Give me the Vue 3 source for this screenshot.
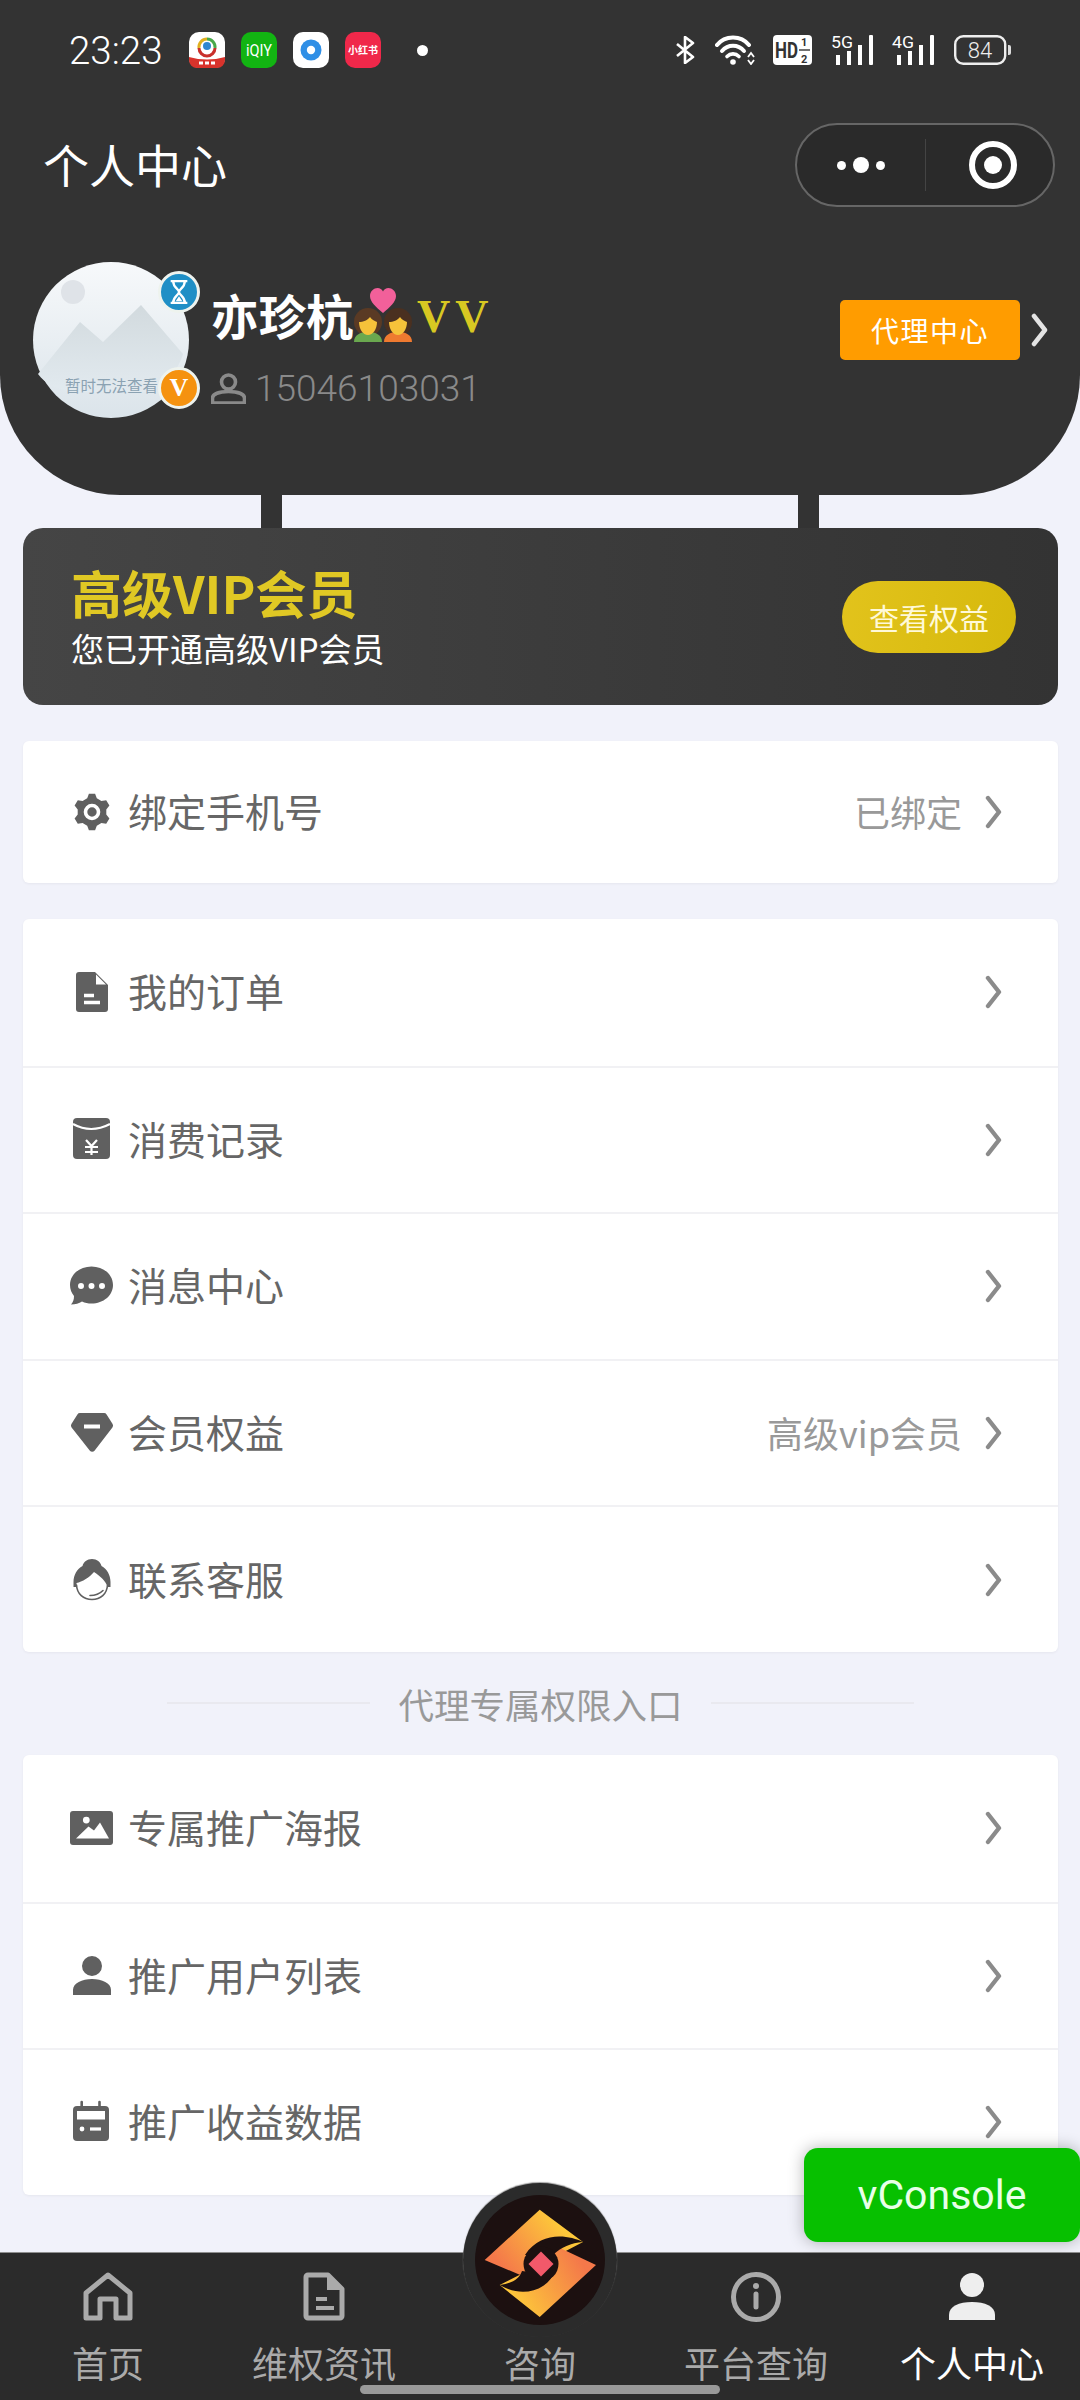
<script setup>
// six-tooth gear outline for the phone row
const gear = () => {
  const pts = [];
  for (let i = 0; i < 6; i++) {
    const a = (Math.PI / 3) * i - Math.PI / 2;
    [[-0.34, 14.5], [-0.17, 18.5], [0.17, 18.5], [0.34, 14.5]].forEach(([d, r]) => {
      pts.push(`${(19 + r * Math.cos(a + d)).toFixed(1)} ${(19 + r * Math.sin(a + d)).toFixed(1)}`);
    });
  }
  return 'M' + pts.join('L') + 'Z';
};

const icons = {
  gear: { d: gear(), w: 'M19 12.5a6.5 6.5 0 1 0 0 13a6.5 6.5 0 1 0 0-13Z', sw: 3.6 },
  doc: {
    d: 'M6 -1H22L35 12V36a3 3 0 0 1-3 3H6a3 3 0 0 1-3-3V2a3 3 0 0 1 3-3Z',
    w: 'M11 22.5H21M11 29.5H27',
    sw: 3.4,
    wf: 'M23 1.5L33 11.5H23Z'
  },
  packet: {
    d: 'M4 -3H33a4 4 0 0 1 4 4V34a4 4 0 0 1-4 4H4a4 4 0 0 1-4-4V1a4 4 0 0 1 4-4Z',
    w: 'M0 3Q18 13 37 3M13 19L18.5 25L24 19M18.5 25V34M12 26H25M12 31H25',
    sw: 2.2
  },
  chat: {
    d: 'M18.5 -0.5C30.5 -0.5 40 7.5 40 18C40 28.5 30.5 36.5 18.5 36.5C15 36.5 12 36 9 34.5C6 36.5 2.5 37.5 -2 37.5C0 35 1 33 1 29C-1.5 26 -3 22 -3 18C-3 7.5 6.5 -0.5 18.5 -0.5Z',
    wf: 'M8 16a3 3 0 1 0 0 6a3 3 0 1 0 0-6ZM18.5 16a3 3 0 1 0 0 6a3 3 0 1 0 0-6ZM29 16a3 3 0 1 0 0 6a3 3 0 1 0 0-6Z'
  },
  gem: {
    d: 'M7 -1H31a3 3 0 0 1 2.6 1.4L39.6 10a3 3 0 0 1-.2 3.4L21.5 36.8a3 3 0 0 1-4.6 0L-1.4 13.4a3 3 0 0 1-.2-3.4L4.4 .4A3 3 0 0 1 7 -1Z',
    w: 'M11 12.5H27',
    sw: 4
  },
  agent: {
    d: 'M19 -2C24 -2 27.5 1 28.5 5C34 8 37.5 14 37.5 21V26H34.5C33 20 27 15 21 11C17 16 9 21 3.5 22V26H.5V21C.5 14 4 8 9.5 5C10.5 1 14 -2 19 -2Z',
    s: 'M3.500 24C4 33 10.500 38.500 19 38.500C27.500 38.500 34 33 34.500 24M17 34.500C21.500 34.500 26.500 33 30 29.500',
    sw: 1.6
  },
  picture: {
    d: 'M0 2H37a3 3 0 0 1 3 3V33a3 3 0 0 1-3 3H0a3 3 0 0 1-3-3V5a3 3 0 0 1 3-3Z',
    wf: 'M13.3 7.7a3.4 3.4 0 1 0 0 6.8a3.4 3.4 0 1 0 0-6.8ZM3 29.5L15.5 17.5L21 21.5L27 13.5L36 29.5Z'
  },
  user: {
    d: 'M19 -1a10 10 0 1 0 0 20a10 10 0 1 0 0-20ZM0 38V33C0 26 9 22 19 22C29 22 38 26 38 33V38Z'
  },
  calendar: {
    d: 'M4 3H32a4 4 0 0 1 4 4V34a4 4 0 0 1-4 4H4a4 4 0 0 1-4-4V7a4 4 0 0 1 4-4Z',
    w: 'M17 26H28',
    sw: 3.2,
    wf: 'M4 8H32V16.5H4ZM9 23.6a2.4 2.4 0 1 0 0 4.8a2.4 2.4 0 1 0 0-4.8Z',
    s: 'M8.7 -1V7M26.5 -1V7',
    ssw: 2.6
  }
};

const mainRows = [
  { icon: 'doc', label: '我的订单' },
  { icon: 'packet', label: '消费记录' },
  { icon: 'chat', label: '消息中心' },
  { icon: 'gem', label: '会员权益', value: '高级vip会员' },
  { icon: 'agent', label: '联系客服' }
];

const agentRows = [
  { icon: 'picture', label: '专属推广海报' },
  { icon: 'user', label: '推广用户列表' },
  { icon: 'calendar', label: '推广收益数据' }
];

const groups = [
  { cls: 'short', rows: [{ icon: 'gear', label: '绑定手机号', value: '已绑定' }] },
  { rows: mainRows },
  { title: '代理专属权限入口', rows: agentRows }
];
</script>

<template>
  <div class="page">
    <header class="hero">
      <div class="status">
        <div class="status-left">
          <span class="clock">23:23</span>
          <svg class="app" viewBox="0 0 36 36">
            <rect width="36" height="36" rx="10" fill="#fff" />
            <path d="M10 16a8 8 0 0 1 8-9" fill="none" stroke="#e0b020" stroke-width="3" />
            <path d="M18 7a8 8 0 0 1 8 9" fill="none" stroke="#4aa84a" stroke-width="3" />
            <path d="M26 16a8 8 0 0 1-16 0" fill="none" stroke="#c9302c" stroke-width="3" />
            <circle cx="18" cy="14" r="4" fill="#2f86d0" />
            <path d="M0 25Q18 30 36 25V28a8 8 0 0 1-8 8H8a8 8 0 0 1-8-8Z" fill="#d8332c" />
            <path d="M10 31H26" stroke="#fff" stroke-width="3" stroke-dasharray="4 2" />
          </svg>
          <svg class="app" viewBox="0 0 36 36">
            <rect width="36" height="36" rx="10" fill="#12b412" />
            <text class="app-text iq" x="18" y="24" text-anchor="middle" textLength="26" lengthAdjust="spacingAndGlyphs">iQIY</text>
          </svg>
          <svg class="app" viewBox="0 0 36 36">
            <rect width="36" height="36" rx="10" fill="#fff" />
            <circle cx="18" cy="18" r="10.5" fill="#2f8fe6" />
            <circle cx="18" cy="18" r="4.2" fill="#fff" />
          </svg>
          <svg class="app" viewBox="0 0 36 36">
            <rect width="36" height="36" rx="10" fill="#f0284a" />
            <text class="app-text" x="18" y="22" text-anchor="middle" textLength="30" lengthAdjust="spacingAndGlyphs">小红书</text>
          </svg>
          <i class="status-dot"></i>
        </div>
        <div class="status-right">
          <svg class="s-bt" viewBox="0 0 21 28">
            <path d="M2 8L18 21L10 27V1L18 7L2 20" fill="none" stroke="#fff" stroke-width="2.6" stroke-linejoin="round" />
          </svg>
          <svg class="s-wifi" viewBox="0 0 40 30">
            <g fill="none" stroke="#fff" stroke-linecap="round">
              <path d="M2 10C10 0 26 0 34 10" stroke-width="4" />
              <path d="M7 16C13 9 23 9 29 16" stroke-width="4" />
              <path d="M12 21.500C15.500 18 20.500 18 24 21.500" stroke-width="3.6" />
            </g>
            <circle cx="18" cy="27" r="2.8" fill="#fff" />
            <path d="M33 22L36 18L39 22M33 25L36 29L39 25" fill="none" stroke="#fff" stroke-width="1.8" />
          </svg>
          <svg class="s-hd" viewBox="0 0 39 30">
            <rect width="39" height="30" rx="4" fill="#fff" />
            <text class="hd" x="2" y="23" textLength="23" lengthAdjust="spacingAndGlyphs">HD</text>
            <text class="hd-small" x="28" y="11">1</text>
            <text class="hd-small" x="28" y="28">2</text>
            <path d="M26 15H37" stroke="#333" stroke-width="1.4" />
          </svg>
          <svg v-for="net in ['5G', '4G']" :key="net" class="s-net" viewBox="0 0 43 30">
            <text class="net" x="0" y="13" textLength="22" lengthAdjust="spacingAndGlyphs">{{ net }}</text>
            <rect x="5" y="20" width="4" height="10" fill="#fff" />
            <rect x="16" y="16" width="4" height="14" fill="#fff" />
            <rect x="27" y="10" width="4" height="20" fill="#fff" />
            <rect x="38" y="0" width="4" height="30" rx="1" fill="#fff" />
          </svg>
          <svg class="s-batt" viewBox="0 0 57 30">
            <rect x="1.2" y="1.2" width="50" height="27.6" rx="8" fill="none" stroke="#eee" stroke-width="2.4" />
            <path d="M54 10h1a2 2 0 0 1 2 2v6a2 2 0 0 1-2 2h-1Z" fill="#ddd" />
            <text class="batt" x="26" y="23" text-anchor="middle">84</text>
          </svg>
        </div>
      </div>

      <div class="nav">
        <h1 class="nav-title">个人中心</h1>
        <div class="capsule">
          <div class="capsule-dots"><i class="d-s"></i><i class="d-l"></i><i class="d-s"></i></div>
          <div class="capsule-target"><i></i></div>
        </div>
      </div>

      <div class="profile">
        <div class="avatar">
          <svg class="avatar-img" viewBox="0 0 156 156">
            <defs>
              <linearGradient id="av" x1="0" y1="0" x2="0" y2="1">
                <stop offset="0" stop-color="#f7f9fb" />
                <stop offset="1" stop-color="#dbe4ea" />
              </linearGradient>
              <linearGradient id="mt" x1="0" y1="0" x2="0" y2="1">
                <stop offset="0" stop-color="#d2dade" />
                <stop offset="1" stop-color="#e2eaef" />
              </linearGradient>
            </defs>
            <circle cx="78" cy="78" r="78" fill="url(#av)" />
            <circle cx="40" cy="30" r="12" fill="#dfe3e8" />
            <path d="M5 112L47 60L70 80L108 43L150 92C148 100 138 120 120 130H40C25 128 12 122 5 112Z" fill="url(#mt)" />
            <text class="avatar-text" x="32" y="130">暂时无法查看</text>
          </svg>
          <span class="badge badge-blue">
            <svg viewBox="0 0 24 30" width="20" height="26">
              <path d="M2 2H22M2 28H22M5 2C5 10 12 11 12 15C12 19 5 20 5 28M19 2C19 10 12 11 12 15C12 19 19 20 19 28" fill="none" stroke="#fff" stroke-width="2.8" />
              <path d="M8 26L12 20L16 26Z" fill="#fff" />
            </svg>
          </span>
          <span class="badge badge-orange">V</span>
        </div>

        <div class="info">
          <div class="name-row">
            <span class="name">亦珍杭</span>
            <svg class="couple" viewBox="0 0 58 56">
              <circle cx="14" cy="36" r="14" fill="#5a3a24" />
              <circle cx="44" cy="36" r="14" fill="#4a3020" />
              <path d="M0 56C0 49 6 46 14 46C22 46 28 49 28 56Z" fill="#6aa84f" />
              <path d="M30 56C30 49 36 46 44 46C52 46 58 49 58 56Z" fill="#ef7a30" />
              <path d="M5 36C9 36 14 34 16 31C18 34 21 35 23 36C23 43 19 49 14 49C9 49 5 43 5 36Z" fill="#f6c23a" />
              <path d="M35 36C39 36 44 34 46 31C48 34 51 35 53 36C53 43 49 49 44 49C39 49 35 43 35 36Z" fill="#f6c23a" />
              <path d="M29 27C22 21 16 16 16 10C16 5 20 2 23.500 2C26 2 28 3.500 29 5.500C30 3.500 32 2 34.500 2C38 2 42 5 42 10C42 16 36 21 29 27Z" fill="#f2609a" />
            </svg>
            <span class="vv">VV</span>
          </div>
          <div class="phone">
            <svg class="phone-icon" viewBox="0 0 35 31">
              <circle cx="17.5" cy="9" r="7" fill="none" stroke="#8a8a8a" stroke-width="3.6" />
              <path d="M1.5 30V25C1.5 21 8 18.500 17.500 18.500C27 18.500 33.500 21 33.500 25V30Z" fill="none" stroke="#8a8a8a" stroke-width="3.6" />
            </svg>
            <span>15046103031</span>
          </div>
        </div>

        <button type="button" class="agent-btn">代理中心</button>
        <svg class="agent-arrow" viewBox="0 0 17 34">
          <path d="M3 3L14 17L3 31" fill="none" stroke="#e4e4e4" stroke-width="4.5" stroke-linecap="round" stroke-linejoin="round" />
        </svg>
      </div>
    </header>

    <div class="joints"><i></i><i></i></div>

    <section class="vip">
      <div>
        <div class="vip-title">高级VIP会员</div>
        <div class="vip-sub">您已开通高级VIP会员</div>
      </div>
      <button type="button" class="vip-btn">查看权益</button>
    </section>

    <main class="menus">
      <template v-for="(group, g) in groups" :key="g">
        <div v-if="group.title" class="divider-title">
          <i></i><span>{{ group.title }}</span><i></i>
        </div>
        <ul class="card" :class="[group.cls, { spaced: !group.title }]">
          <li v-for="row in group.rows" :key="row.label" class="row">
            <svg class="row-icon" viewBox="0 0 38 38">
              <path :d="icons[row.icon].d" fill="#606060" />
              <path v-if="icons[row.icon].s" :d="icons[row.icon].s" fill="none" stroke="#606060" :stroke-width="icons[row.icon].ssw || icons[row.icon].sw" stroke-linecap="round" />
              <path v-if="icons[row.icon].wf" :d="icons[row.icon].wf" fill="#fff" />
              <path v-if="icons[row.icon].w" :d="icons[row.icon].w" fill="none" stroke="#fff" :stroke-width="icons[row.icon].sw" />
            </svg>
            <span class="row-label">{{ row.label }}</span>
            <span v-if="row.value" class="row-value">{{ row.value }}</span>
            <svg class="row-arrow" viewBox="0 0 17 34">
              <path d="M3 3L14 17L3 31" fill="none" stroke="#8b8b8b" stroke-width="4.4" stroke-linecap="round" stroke-linejoin="round" />
            </svg>
          </li>
        </ul>
      </template>
    </main>

    <nav class="tabs">
      <div class="tab">
        <svg class="tab-icon" viewBox="0 0 50 50">
          <path d="M3 46V21L25 3L47 21V46H33V27H17V46Z" fill="none" stroke="#aaa" stroke-width="5" stroke-linejoin="round" />
        </svg>
        <span>首页</span>
      </div>
      <div class="tab">
        <svg class="tab-icon" viewBox="0 0 50 50">
          <path d="M9 3H29L43 17V44a2 2 0 0 1-2 2H9a2 2 0 0 1-2-2V5a2 2 0 0 1 2-2Z" fill="none" stroke="#aaa" stroke-width="5" stroke-linejoin="round" />
          <path d="M28 3V18H43Z" fill="#aaa" />
          <path d="M17 27H28M17 36H35" stroke="#aaa" stroke-width="4" />
        </svg>
        <span>维权资讯</span>
      </div>
      <div class="tab">
        <div class="tab-icon"></div>
        <span>咨询</span>
        <div class="logo">
          <svg viewBox="0 0 154 154" width="154" height="154">
            <defs>
              <linearGradient id="lgA" gradientUnits="userSpaceOnUse" x1="95" y1="40" x2="40" y2="85">
                <stop offset="0" stop-color="#fdc83a" />
                <stop offset="1" stop-color="#f4784a" />
              </linearGradient>
              <linearGradient id="lgB" gradientUnits="userSpaceOnUse" x1="55" y1="125" x2="122" y2="85">
                <stop offset="0" stop-color="#fdc83a" />
                <stop offset="1" stop-color="#f4784a" />
              </linearGradient>
            </defs>
            <circle cx="77" cy="77" r="65" fill="#1c1010" />
            <path d="M21.7 77L76.7 26.7L120 59L78 81L62 94Z" fill="url(#lgA)" />
            <path d="M133 82L76.7 134L36.7 102L78 81L97 65Z" fill="url(#lgB)" />
            <path d="M120 59C105 52 78 48 62 72L90 72C98 64 108 60 120 59Z" fill="#1c1010" />
            <path d="M36.7 102C50 100 56 96 59 88L90 92C82 108 58 115 36.7 102Z" fill="#1c1010" />
            <circle cx="78" cy="81" r="17.500" fill="#1c1010" />
            <path d="M78 68.500L90.500 81L78 93.500L65.500 81Z" fill="#f2596a" />
          </svg>
        </div>
      </div>
      <div class="tab">
        <svg class="tab-icon" viewBox="0 0 50 50">
          <circle cx="25" cy="25" r="22.500" fill="none" stroke="#aaa" stroke-width="5" />
          <circle cx="25" cy="14" r="3" fill="#aaa" />
          <path d="M25 22V35" stroke="#aaa" stroke-width="5" stroke-linecap="round" />
        </svg>
        <span>平台查询</span>
      </div>
      <div class="tab active">
        <svg class="tab-icon" viewBox="0 0 50 50">
          <circle cx="25" cy="13" r="12" fill="#eee" />
          <path d="M2 48V43C2 34 12 30 25 30C38 30 48 34 48 43V48Z" fill="#eee" />
        </svg>
        <span>个人中心</span>
      </div>
      <i class="home-bar"></i>
    </nav>

    <div class="vconsole">vConsole</div>
  </div>
</template>

<style scoped>
.page {
  position: relative;
  width: 1080px;
  height: 2400px;
  overflow: hidden;
  display: flex;
  flex-direction: column;
  background: #f1f2fa;
  font-family: "Noto Sans CJK SC", "Noto Sans", sans-serif;
}

.hero {
  height: 495px;
  flex: none;
  background: #333;
  border-radius: 0 0 120px 120px;
  color: #fff;
}

.status {
  height: 100px;
  display: flex;
  align-items: center;
  justify-content: space-between;
  padding: 0 69px 0 69px;
}

.status-left,
.status-right {
  display: flex;
  align-items: center;
}

.status-left {
  gap: 16px;
}

.status-right {
  gap: 18.6px;
}

.clock {
  width: 104px;
  font-family: Roboto, sans-serif;
  font-weight: 300;
  font-size: 38.5px;
}

.app {
  width: 36px;
  height: 36px;
}

.app-text {
  font-family: "Noto Sans CJK SC", sans-serif;
  font-size: 10px;
  font-weight: 700;
  fill: #fff;
}

.app-text.iq {
  font-family: Roboto, sans-serif;
  font-size: 17px;
  font-weight: 400;
}

.status-dot {
  width: 11px;
  height: 11px;
  margin-left: 20px;
  border-radius: 50%;
  background: #fff;
}

.s-bt {
  width: 21px;
  height: 28px;
}

.s-wifi {
  width: 40px;
  height: 30px;
}

.s-hd {
  width: 39px;
  height: 30px;
}

.hd {
  font-family: Roboto, sans-serif;
  font-size: 22px;
  font-weight: 700;
  fill: #333;
}

.hd-small {
  font-family: Roboto, sans-serif;
  font-size: 11px;
  font-weight: 700;
  fill: #333;
}

.s-net {
  width: 43px;
  height: 30px;
  overflow: visible;
}

.net {
  font-family: Roboto, sans-serif;
  font-size: 17px;
  fill: #fff;
}

.s-batt {
  width: 57px;
  height: 30px;
}

.batt {
  font-family: Roboto, sans-serif;
  font-size: 22px;
  font-weight: 300;
  fill: #eee;
}

.nav {
  height: 130px;
  display: flex;
  align-items: center;
  justify-content: space-between;
  padding: 0 25px 0 43px;
}

.nav-title {
  margin: 0 0 4px;
  font-size: 46px;
  font-weight: 400;
}

.capsule {
  width: 260px;
  height: 84px;
  box-sizing: border-box;
  display: flex;
  border: 2px solid #666;
  border-radius: 42px;
  background: #2a2a2a;
}

.capsule-dots {
  width: 128px;
  display: flex;
  align-items: center;
  justify-content: center;
  gap: 7px;
}

.capsule-dots i {
  border-radius: 50%;
  background: #fff;
}

.d-s {
  width: 9px;
  height: 9px;
}

.d-l {
  width: 16px;
  height: 16px;
}

.capsule-target {
  flex: 1;
  display: flex;
  align-items: center;
  justify-content: center;
  padding-left: 6px;
  border-left: 1px solid #444;
  margin: 14px 0;
}

.capsule-target i {
  width: 48px;
  height: 48px;
  box-sizing: border-box;
  border: 6px solid #fff;
  border-radius: 50%;
  display: flex;
  align-items: center;
  justify-content: center;
}

.capsule-target i::after {
  content: "";
  width: 18px;
  height: 18px;
  border-radius: 50%;
  background: #fff;
}

.profile {
  display: flex;
  align-items: flex-start;
  padding: 32px 32px 0 33px;
}

.avatar {
  position: relative;
  width: 156px;
  height: 156px;
  flex: none;
}

.avatar-img {
  display: block;
  width: 156px;
  height: 156px;
}

.avatar-text {
  font-size: 15.5px;
  fill: #8ba2b2;
  font-family: "Noto Sans CJK SC", sans-serif;
}

.badge {
  position: absolute;
  left: 125px;
  width: 42px;
  height: 42px;
  box-sizing: border-box;
  border: 3px solid #eef3ee;
  border-radius: 50%;
  display: flex;
  align-items: center;
  justify-content: center;
}

.badge-blue {
  top: 9px;
  background: #1f8fc6;
}

.badge-orange {
  top: 105px;
  background: #f5920f;
  color: #fff;
  font-family: "Liberation Serif", serif;
  font-weight: 700;
  font-size: 26px;
}

.info {
  margin: 22px 0 0 22px;
}

.name-row {
  height: 60px;
  display: flex;
  align-items: center;
}

.name {
  font-size: 47.5px;
  font-weight: 700;
  width: 143px;
  white-space: nowrap;
}

.couple {
  width: 58px;
  height: 56px;
  position: relative;
  top: 0;
}

.vv {
  margin-left: 5px;
  color: #d8c822;
  font-family: "Liberation Serif", serif;
  font-weight: 700;
  font-size: 46px;
  letter-spacing: 5px;
  line-height: 60px;
  position: relative;
  top: 3px;
}

.phone {
  height: 50px;
  margin-top: 19px;
  display: flex;
  align-items: center;
  color: #8a8a8a;
  font-family: Roboto, sans-serif;
  font-weight: 300;
  font-size: 37px;
}

.phone-icon {
  width: 35px;
  height: 31px;
  margin-right: 9px;
}

.agent-btn {
  margin: 38px 0 0 auto;
  width: 180px;
  height: 60px;
  padding: 0;
  border: none;
  border-radius: 5px;
  background: #ff9c00;
  color: #fff;
  font-family: inherit;
  font-size: 28px;
  letter-spacing: 1.5px;
}

.agent-arrow {
  width: 17px;
  height: 34px;
  margin: 51px 0 0 11px;
  flex: none;
}

.joints {
  height: 33px;
  flex: none;
  display: flex;
  justify-content: space-between;
  padding: 0 261px;
}

.joints i {
  width: 21px;
  background: #333;
}

.vip {
  height: 177px;
  flex: none;
  margin: 0 22px 0 23px;
  padding: 0 42px 0 48px;
  box-sizing: border-box;
  display: flex;
  align-items: center;
  justify-content: space-between;
  border-radius: 20px;
  background: linear-gradient(90deg, #454545, #333);
}

.vip-title {
  color: #e0c824;
  font-size: 51px;
  font-weight: 700;
  line-height: 60px;
}

.vip-sub {
  margin-top: 3px;
  color: #fff;
  font-size: 33px;
  line-height: 46px;
}

.vip-btn {
  width: 174px;
  height: 72px;
  padding: 0;
  border: none;
  border-radius: 36px;
  background: linear-gradient(100deg, #e2c31c, #d6b90c);
  color: #fff9d8;
  font-family: inherit;
  font-size: 30px;
}

.menus {
  flex: 1;
  display: flex;
  flex-direction: column;
  margin: 0 22px 0 23px;
}

.card {
  list-style: none;
  margin: 0;
  padding: 0;
  background: #fff;
  border-radius: 6px;
  box-shadow: 0 1px 3px rgba(0, 0, 0, 0.05);
}

.card.spaced {
  margin-top: 36px;
}

.row {
  height: 146.6px;
  box-sizing: border-box;
  display: flex;
  align-items: center;
  padding: 0 56px 0 50px;
  color: #666;
  font-size: 39px;
  border-top: 2px solid #f1f1f4;
}

.row:first-child {
  border-top: none;
}

.short .row {
  height: 142px;
}

.row-icon {
  width: 38px;
  height: 38px;
  flex: none;
  overflow: visible;
}

.row-label {
  margin-left: 17px;
  padding-bottom: 4px;
}

.row-value {
  margin-left: auto;
  padding-bottom: 3px;
  color: #999;
  font-size: 36px;
}

.row-arrow {
  width: 17px;
  height: 34px;
  flex: none;
  margin-left: 23px;
}

.row-label + .row-arrow {
  margin-left: auto;
}

.divider-title {
  height: 103px;
  display: flex;
  align-items: center;
  justify-content: center;
  color: #999;
  font-size: 35.5px;
}

.divider-title span {
  margin: 0 28px;
}

.divider-title i {
  width: 203px;
  height: 2px;
  background: #e9e9ef;
}

.tabs {
  position: relative;
  height: 148px;
  flex: none;
  box-sizing: border-box;
  display: flex;
  border-top: 1px solid #8f8f8f;
  background: #2b2b2b;
}

.tab {
  position: relative;
  flex: 1;
  display: flex;
  flex-direction: column;
  align-items: center;
  padding-top: 19px;
  color: #aaa;
  font-size: 36px;
}

.tab span {
  margin-top: 14px;
  line-height: 52px;
  white-space: nowrap;
}

.tab.active {
  color: #fff;
}

.tab-icon {
  width: 50px;
  height: 50px;
  flex: none;
}

.logo {
  position: absolute;
  top: -70px;
  left: 50%;
  width: 154px;
  height: 154px;
  margin-left: -77px;
  border-radius: 50%;
  background: #2b2b2b;
  box-shadow: 0 -1px 1px #a0a0a0;
}

.home-bar {
  position: absolute;
  left: 360px;
  bottom: 6px;
  width: 360px;
  height: 9px;
  border-radius: 5px;
  background: #999;
}

.vconsole {
  position: absolute;
  right: 0;
  bottom: 158px;
  width: 276px;
  height: 94px;
  display: flex;
  align-items: center;
  justify-content: center;
  border-radius: 14px;
  background: #07c000;
  box-shadow: 0 0 16px rgba(0, 0, 0, 0.3);
  color: #e8ffe8;
  font-family: Roboto, sans-serif;
  font-size: 41px;
}
</style>

<style>
body {
  background: #f1f2fa;
}
</style>
